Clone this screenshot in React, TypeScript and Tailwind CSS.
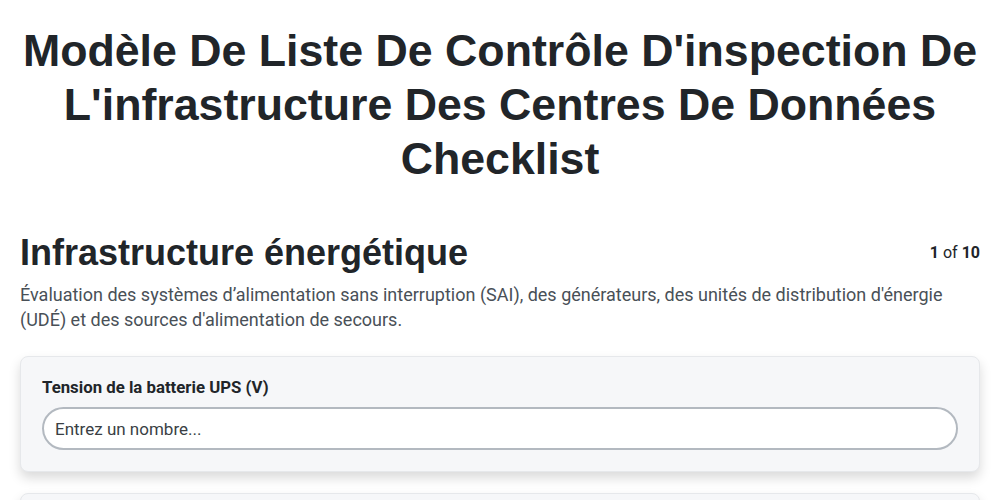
export default function App() {
  return (
    <div className="min-h-screen bg-white px-5 pt-[24px] text-[#212529]" style={{ fontFamily: 'Roboto, "Liberation Sans", Arial, sans-serif' }}>
      <h1 className="-mx-1 text-center text-[44.7px] font-bold leading-[54px]" style={{ fontFamily: '"Liberation Sans", Arial, sans-serif' }}>
        Modèle De Liste De Contrôle D'inspection De L'infrastructure Des Centres De Données Checklist
      </h1>
      <div className="mt-[45px] flex items-start justify-between">
        <h2 className="text-[36px] font-bold leading-[1.2]" style={{ fontFamily: '"Liberation Sans", Arial, sans-serif' }}>Infrastructure énergétique</h2>
        <div className="mt-[10px] text-[16px]">
          <span className="font-bold">1</span> of <span className="font-bold">10</span>
        </div>
      </div>
      <p className="mt-[8px] text-[18px] leading-[25px] text-[#495057]">
        Évaluation des systèmes d’alimentation sans interruption (SAI), des générateurs, des unités de distribution d'énergie (UDÉ) et des sources d'alimentation de secours.
      </p>
      <div className="mt-[24px] flex flex-col gap-[21px]">
        <div className="rounded-lg border border-[#e6e8eb] bg-[#f6f7f9] px-[21px] pb-[21px] pt-[20px] shadow-[0_6px_12px_rgba(0,0,0,0.15)]">
          <label className="block text-[16.8px] font-bold leading-[20px]">Tension de la batterie UPS (V)</label>
          <input
            className="mt-[10px] block h-[43px] w-full rounded-full border-2 border-[#b3b9c0] bg-white px-[11px] text-[17px] text-[#212529] placeholder:text-[#3a3f44] outline-none"
            placeholder="Entrez un nombre..."
          />
        </div>
        <div className="h-[100px] rounded-lg border border-[#e6e8eb] bg-[#f6f7f9] shadow-[0_6px_12px_rgba(0,0,0,0.15)]" />
      </div>
    </div>
  );
}
